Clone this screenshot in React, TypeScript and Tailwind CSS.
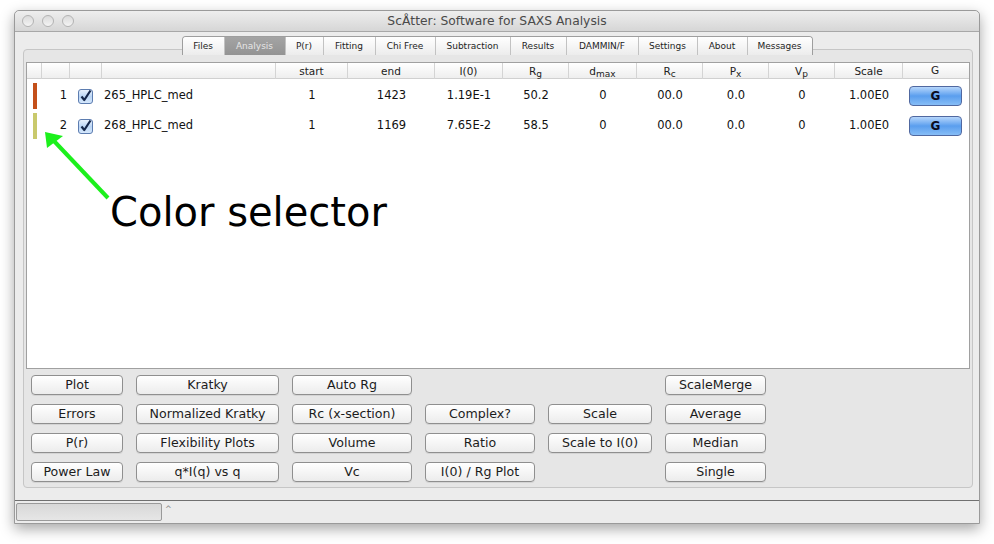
import React from "react"

const UI = { fontFamily: '"DejaVu Sans", Verdana, sans-serif' }

const tabs = [
  { label: "Files", w: 41 },
  { label: "Analysis", w: 61, active: true },
  { label: "P(r)", w: 38 },
  { label: "Fitting", w: 52 },
  { label: "Chi Free", w: 60 },
  { label: "Subtraction", w: 75 },
  { label: "Results", w: 56 },
  { label: "DAMMIN/F", w: 72 },
  { label: "Settings", w: 59 },
  { label: "About", w: 50 },
  { label: "Messages", w: 65 },
]

const rows = [
  { n: 1, color: "#c4501a", name: "265_HPLC_med", start: "1", end: "1423", i0: "1.19E-1", rg: "50.2" },
  { n: 2, color: "#c9c96c", name: "268_HPLC_med", start: "1", end: "1169", i0: "7.65E-2", rg: "58.5" },
]

// six columns of buttons, null = empty cell
const buttons: (string | null)[][] = [
  ["Plot", "Kratky", "Auto Rg", null, null, "ScaleMerge"],
  ["Errors", "Normalized Kratky", "Rc (x-section)", "Complex?", "Scale", "Average"],
  ["P(r)", "Flexibility Plots", "Volume", "Ratio", "Scale to I(0)", "Median"],
  ["Power Law", "q*I(q) vs q", "Vc", "I(0) / Rg Plot", null, "Single"],
]

const gridCols = "grid-cols-[15px_28px_32px_174px_72px_87px_68px_66px_68px_66px_66px_66px_68px_1fr]"

function Checkbox() {
  return (
    <svg width="15" height="15" viewBox="0 0 15 15">
      <defs>
        <linearGradient id="cb" x1="0" y1="0" x2="0" y2="1">
          <stop offset="0" stopColor="#eaf2fd" />
          <stop offset="0.5" stopColor="#bcd6f5" />
          <stop offset="1" stopColor="#d6e8fc" />
        </linearGradient>
      </defs>
      <rect x="0.5" y="0.5" width="14" height="14" rx="2.5" fill="url(#cb)" stroke="#5d7db0" />
      <path d="M3.5 7.5 L6.3 11 L12.5 1.5" fill="none" stroke="#14264a" strokeWidth="2.2" strokeLinejoin="round" />
    </svg>
  )
}

function Btn({ label }: { label: string }) {
  return (
    <div className="h-[20px] flex items-center justify-center rounded-[4px] border border-[#8f8f8f] bg-gradient-to-b from-[#ffffff] to-[#ececec] text-[12.6px] text-[#1c1c1c] leading-none shadow-[0_1px_0_rgba(0,0,0,0.08)]">
      {label}
    </div>
  )
}

function HeaderCell({ children }: { children?: React.ReactNode }) {
  return (
    <div className="h-full flex items-center justify-center border-r border-[#d4d4d4] text-[10.5px] text-[#222] leading-none">
      {children}
    </div>
  )
}

export default function App() {
  return (
    <div className="relative w-[994px] h-[544px] bg-white overflow-hidden" style={UI}>
      {/* Window */}
      <div className="ml-[14px] mt-[10px] w-[966px] h-[514px] flex flex-col bg-[#ececec] border border-[#9a9a9a] rounded-t-[5px] shadow-[0_5px_14px_rgba(0,0,0,0.35)]">
        {/* Title bar */}
        <div className="relative h-[21px] shrink-0 flex items-center justify-center rounded-t-[5px] border-b border-[#a8a8a8] bg-gradient-to-b from-[#eeeeee] to-[#d6d6d6]">
          <div className="absolute left-[7px] top-[4px] flex gap-[8px]">
            <div className="w-[12px] h-[12px] rounded-full border border-[#b3b3b3] bg-gradient-to-b from-[#dadada] to-[#f4f4f4]" />
            <div className="w-[12px] h-[12px] rounded-full border border-[#b3b3b3] bg-gradient-to-b from-[#dadada] to-[#f4f4f4]" />
            <div className="w-[12px] h-[12px] rounded-full border border-[#b3b3b3] bg-gradient-to-b from-[#dadada] to-[#f4f4f4]" />
          </div>
          <span className="text-[12.3px] text-[#4a4a4a] leading-none">ScÅtter: Software for SAXS Analysis</span>
        </div>

        {/* Body */}
        <div className="flex-1 flex flex-col pt-[4px]">
          {/* Tabs */}
          <div className="relative z-10 h-[19px] flex justify-center">
            <div className="flex rounded-t-[4px] border border-[#9e9e9e] border-b-0 overflow-hidden">
              {tabs.map((t, i) => (
                <div
                  key={t.label}
                  style={{ width: t.w }}
                  className={
                    "h-full flex items-center justify-center text-[9px] leading-none " +
                    (i > 0 ? "border-l border-[#c2c2c2] " : "") +
                    (t.active
                      ? "bg-gradient-to-b from-[#a4a4a4] to-[#939393] text-[#e6e6e6]"
                      : "bg-gradient-to-b from-[#ffffff] to-[#ececec] text-[#1e1e1e]")
                  }
                >
                  {t.label}
                </div>
              ))}
            </div>
          </div>

          {/* Panel */}
          <div className="-mt-[6px] ml-[8px] mr-[6px] h-[439px] flex flex-col rounded-[4px] border border-[#c6c6c6] bg-[#e6e6e6] pt-[12px] px-[2px]">
            {/* Table */}
            <div className="h-[307px] bg-white border border-[#a0a0a0]">
              <div className={"grid h-[16px] border-b border-[#d0d0d0] bg-gradient-to-b from-[#ffffff] to-[#eeeeee] " + gridCols}>
                <HeaderCell />
                <HeaderCell />
                <HeaderCell />
                <HeaderCell />
                <HeaderCell>start</HeaderCell>
                <HeaderCell>end</HeaderCell>
                <HeaderCell>I(0)</HeaderCell>
                <HeaderCell>
                  R<sub className="text-[9px] relative top-[3px]">g</sub>
                </HeaderCell>
                <HeaderCell>
                  d<sub className="text-[9px] relative top-[3px]">max</sub>
                </HeaderCell>
                <HeaderCell>
                  R<sub className="text-[9px] relative top-[3px]">c</sub>
                </HeaderCell>
                <HeaderCell>
                  P<sub className="text-[9px] relative top-[3px]">x</sub>
                </HeaderCell>
                <HeaderCell>
                  V<sub className="text-[9px] relative top-[3px]">p</sub>
                </HeaderCell>
                <HeaderCell>Scale</HeaderCell>
                <div className="h-full flex items-center justify-center text-[10.5px] text-[#222] pr-[2px]">G</div>
              </div>

              <div className="pt-[2px]">
                {rows.map((r) => (
                  <div key={r.n} className={"grid h-[30px] items-center text-[11.5px] text-[#111] " + gridCols}>
                    <div className="h-full py-[2px] pl-[6px]">
                      <div className="h-full w-[4px]" style={{ backgroundColor: r.color }} />
                    </div>
                    <div className="text-right pr-[3px]">{r.n}</div>
                    <div className="flex items-center pl-[8px]">
                      <Checkbox />
                    </div>
                    <div className="pl-[2px]">{r.name}</div>
                    <div className="text-center">{r.start}</div>
                    <div className="text-center">{r.end}</div>
                    <div className="text-center">{r.i0}</div>
                    <div className="text-center">{r.rg}</div>
                    <div className="text-center">0</div>
                    <div className="text-center">00.0</div>
                    <div className="text-center">0.0</div>
                    <div className="text-center">0</div>
                    <div className="text-center">1.00E0</div>
                    <div className="pl-[6px]">
                      <div className="w-[53px] h-[20px] flex items-center justify-center rounded-[4px] border border-[#5068a0] bg-gradient-to-b from-[#b6d6fb] via-[#5a9eee] to-[#86bdf6] text-[12px] font-bold text-[#0c0c20]">
                        G
                      </div>
                    </div>
                  </div>
                ))}
              </div>
            </div>

            {/* Buttons */}
            <div className="mt-[6px] pl-[5px] grid grid-cols-[92px_143px_120px_110px_104px_101px] auto-rows-[20px] gap-x-[13px] gap-y-[9px]">
              {buttons.flat().map((b, i) => (b ? <Btn key={i} label={b} /> : <div key={i} />))}
            </div>
          </div>

          <div className="flex-1" />
        </div>

        {/* Status bar */}
        <div className="h-[23px] shrink-0 border-t border-[#707070] flex items-start pt-[2px]">
          <div className="ml-[1px] w-[146px] h-[18px] rounded-[2px] border border-[#9a9a9a] bg-gradient-to-b from-[#d8d8d8] to-[#e6e6e6]" />
          <span className="ml-[3px] mt-[3px] text-[8px] text-[#888] leading-none">^</span>
        </div>
      </div>

      {/* Annotation overlay */}
      <svg className="absolute left-0 top-0 pointer-events-none" width="994" height="544">
        <line x1="108" y1="198" x2="54" y2="141" stroke="#1cf01c" strokeWidth="4" />
        <polygon points="45,132 47,148 63,136" fill="#1cf01c" />
      </svg>
      <div className="absolute left-[110px] top-[192px] text-[40px] leading-none text-black">Color selector</div>
    </div>
  )
}
